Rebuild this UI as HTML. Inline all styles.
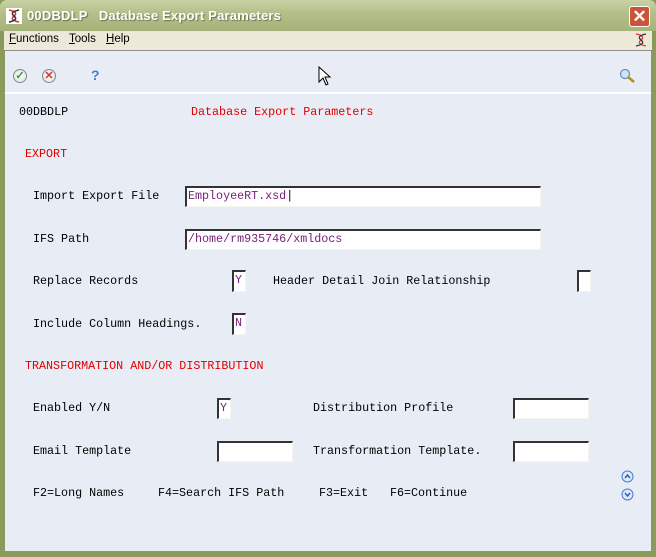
<!DOCTYPE html>
<html><head><style>
*{margin:0;padding:0;box-sizing:border-box}
body{width:656px;height:557px;overflow:hidden;background:#8a9a5b;font-family:"Liberation Sans",sans-serif;position:relative}
.title{position:absolute;left:0;top:0;width:656px;height:31px;background:linear-gradient(#c9d3a6,#b3c08a 40%,#a5b27a);border-radius:7px 7px 0 0}
.title .t{position:absolute;left:27px;top:8px;font-size:13px;font-weight:bold;color:#fff;text-shadow:1px 1px 1px #6b7550;letter-spacing:0.2px}
.close{position:absolute;left:629px;top:6px;width:21px;height:21px;background:#c8553a;border:1px solid #fff;border-radius:3px;color:#fff;font-size:17px;line-height:19px;text-align:center;font-weight:bold}
.menu{position:absolute;left:4px;top:31px;width:648px;height:19px;background:#ece9d8}
.menu span{position:absolute;top:2px;font-size:11.5px;color:#000}
.content{position:absolute;left:5px;top:50px;width:646px;height:501px;background:#e8ecf4;border-top:1px solid #8f8f8f}
.line{position:absolute;left:5px;top:92px;width:646px;height:2px;background:#fff}
.m{position:absolute;font-family:"Liberation Mono",monospace;font-size:11.7px;line-height:13px;color:#000;white-space:pre}
.r{color:#e00000}
.in{position:absolute;background:#fff;border-left:2px solid #333;border-top:2px solid #333;border-right:1px solid #f5f5f0;border-bottom:1px solid #f5f5f0;font-family:"Liberation Mono",monospace;font-size:11.7px;color:#7a207a;padding-left:1px;line-height:17px;white-space:pre}
.ic{position:absolute;width:14px;height:14px;border-radius:50%;border:1px solid #888;background:radial-gradient(#fff,#ddd);font-size:11px;text-align:center;line-height:12px;font-weight:bold}
</style></head><body>
<div class="title">
<svg style="position:absolute;left:6px;top:8px" width="16" height="16"><rect x="0" y="0" width="16" height="16" fill="#fff"/><path d="M3 2 Q13 4 8 8 Q3 12 13 14" stroke="#c33" stroke-width="1.5" fill="none"/><path d="M13 2 Q3 4 8 8 Q13 12 3 14" stroke="#333" stroke-width="1.5" fill="none"/></svg>
<div class="t">00DBDLP &nbsp;&nbsp;Database Export Parameters</div>
<div class="close">✕</div>
</div>
<div class="menu"><span style="left:5px"><u>F</u>unctions</span><span style="left:65px"><u>T</u>ools</span><span style="left:102px"><u>H</u>elp</span>
<svg style="position:absolute;left:629px;top:1px" width="16" height="16"><path d="M3 2 Q13 4 8 8 Q3 12 13 14" stroke="#e33" stroke-width="1.3" fill="none"/><path d="M13 2 Q3 4 8 8 Q13 12 3 14" stroke="#333" stroke-width="1.3" fill="none"/></svg></div>
<div class="content"></div>
<div class="line"></div>
<div class="ic" style="left:13px;top:69px;color:#2a9a2a">✓</div>
<div class="ic" style="left:42px;top:69px;color:#d33">✕</div>
<div style="position:absolute;left:91px;top:67px;color:#4a7ad0;font-weight:bold;font-size:14px">?</div>
<svg style="position:absolute;left:619px;top:68px" width="18" height="16"><circle cx="6" cy="6" r="4.5" fill="#cfe3f7" stroke="#6a8fc0" stroke-width="1.3"/><path d="M9 9 L15 14" stroke="#b09020" stroke-width="2.5"/></svg>
<svg style="position:absolute;left:318px;top:66px" width="14" height="22"><path d="M1 1 L1 16 L5 12 L8 19 L10 18 L7 11 L12 11 Z" fill="#fff" stroke="#000"/></svg>
<div class="m" style="left:19px;top:106px">00DBDLP</div>
<div class="m r" style="left:191px;top:106px">Database Export Parameters</div>
<div class="m r" style="left:25px;top:148px">EXPORT</div>
<div class="m" style="left:33px;top:190px">Import Export File</div>
<div class="in" style="left:185px;top:186px;width:356px;height:21px">EmployeeRT.xsd<span style="color:#000">|</span></div>
<div class="m" style="left:33px;top:233px">IFS Path</div>
<div class="in" style="left:185px;top:229px;width:356px;height:21px">/home/rm935746/xmldocs</div>
<div class="m" style="left:33px;top:275px">Replace Records</div>
<div class="in" style="left:232px;top:270px;width:14px;height:22px">Y</div>
<div class="m" style="left:273px;top:275px">Header Detail Join Relationship</div>
<div class="in" style="left:577px;top:270px;width:14px;height:22px"></div>
<div class="m" style="left:33px;top:318px">Include Column Headings.</div>
<div class="in" style="left:232px;top:313px;width:14px;height:22px">N</div>
<div class="m r" style="left:25px;top:360px">TRANSFORMATION AND/OR DISTRIBUTION</div>
<div class="m" style="left:33px;top:402px">Enabled Y/N</div>
<div class="in" style="left:217px;top:398px;width:14px;height:21px">Y</div>
<div class="m" style="left:313px;top:402px">Distribution Profile</div>
<div class="in" style="left:513px;top:398px;width:76px;height:21px"></div>
<div class="m" style="left:33px;top:445px">Email Template</div>
<div class="in" style="left:217px;top:441px;width:76px;height:21px"></div>
<div class="m" style="left:313px;top:445px">Transformation Template.</div>
<div class="in" style="left:513px;top:441px;width:76px;height:21px"></div>
<div class="m" style="left:33px;top:487px">F2=Long Names</div>
<div class="m" style="left:158px;top:487px">F4=Search IFS Path</div>
<div class="m" style="left:319px;top:487px">F3=Exit</div>
<div class="m" style="left:390px;top:487px">F6=Continue</div>
<svg style="position:absolute;left:621px;top:470px" width="13" height="13"><circle cx="6.5" cy="6.5" r="5.5" fill="#dde9fb" stroke="#4a7ad0"/><path d="M4 8 L6.5 5 L9 8" stroke="#2a5ab0" stroke-width="1.4" fill="none"/></svg>
<svg style="position:absolute;left:621px;top:488px" width="13" height="13"><circle cx="6.5" cy="6.5" r="5.5" fill="#dde9fb" stroke="#4a7ad0"/><path d="M4 5 L6.5 8 L9 5" stroke="#2a5ab0" stroke-width="1.4" fill="none"/></svg>
</body></html>
